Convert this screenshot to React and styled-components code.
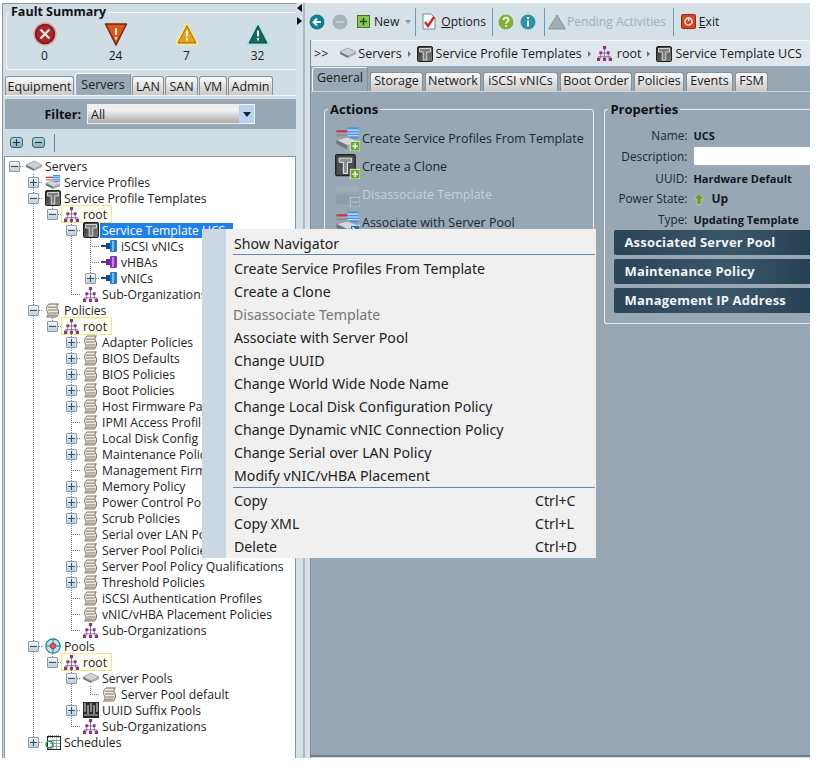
import styled, { createGlobalStyle } from "styled-components";

const GlobalStyle = createGlobalStyle`
  html, body { margin: 0; padding: 0; background: #fff; }
  body { font-family: "Open Sans", "Liberation Sans", sans-serif; color: #1c1c1c; }
  * { box-sizing: border-box; }
`;

/* ---- icons ---- */
const ServerIcon = ({ w = 18 }) => (
  <svg width={w} height={w * 0.67} viewBox="0 0 18 12">
    <path d="M1 5 9 1l8 4-8 4z" fill="#cfd2d4" stroke="#8b8f92" strokeWidth=".7" />
    <path d="M1 5v2l8 4V9z" fill="#6f7376" />
    <path d="M17 5v2l-8 4V9z" fill="#a5a9ac" />
  </svg>
);

const ProfileIcon = ({ size = 18, badge }) => (
  <svg width={size} height={size} viewBox="0 0 18 18">
    <rect x="1" y="3" width="8" height="1.6" fill="#c2384a" />
    <rect x="1" y="6" width="8" height="1.4" fill="#8a8f94" />
    <rect x="9" y="1" width="8" height="8" fill="#4b93d8" />
    <path d="M9 3h8M9 5h8M9 7h8" stroke="#d8ecfa" strokeWidth=".8" />
    <path d="M1 10 9 8l8 3-8 3z" fill="#d4d7d9" stroke="#8b8f92" strokeWidth=".5" />
    <path d="M1 10v3l8 4v-3z" fill="#74787b" />
    <path d="M17 11v3l-8 3v-3z" fill="#a5a9ac" />
    {badge}
  </svg>
);

const TemplateIcon = ({ size = 16 }) => (
  <svg width={size} height={size} viewBox="0 0 16 16">
    <defs>
      <linearGradient id="tpl" x1="0" y1="0" x2="1" y2="1">
        <stop offset="0" stopColor="#2a2a2a" />
        <stop offset="1" stopColor="#858585" />
      </linearGradient>
    </defs>
    <rect x=".5" y=".5" width="15" height="15" rx="1.5" fill="url(#tpl)" stroke="#222" />
    <path d="M2.500 2.500h11v3.500h-3.700v8H6.200V6H2.500z" fill="#7f7f7f" stroke="#e2e2e2" strokeWidth=".9" />
  </svg>
);

const OrgIcon = ({ size = 15 }) => (
  <svg width={size} height={size} viewBox="0 0 14 14">
    <path d="M7 2v9M3.500 6.500h7M3.500 6.500v5M10.500 6.500v5M1.500 10h11M1.500 10v2M12.500 10v2" stroke="#7d6a8c" strokeWidth=".8" fill="none" />
    <g fill="#90307f">
      <rect x="5.500" y="0" width="3" height="3" />
      <rect x="2.200" y="5" width="2.600" height="2.600" />
      <rect x="9.200" y="5" width="2.600" height="2.600" />
      <rect x="0" y="11" width="3" height="3" />
      <rect x="5.500" y="11" width="3" height="3" />
      <rect x="11" y="11" width="3" height="3" />
    </g>
  </svg>
);

const ScrollIcon = () => (
  <svg width="15" height="15" viewBox="0 0 15 15">
    <path d="M4 1h9.500c-2 1-2 3-.8 5 1.500 2.500 1 5.500-1.200 8H1.500c2-1 2-3.500.8-5.500C.8 6 1.500 2.500 4 1z" fill="#efeadf" stroke="#736b5e" strokeWidth="1" />
    <path d="M2.800 4.200h8.700M3 7h9M4.200 10h8.300M3.500 12.200h8" stroke="#736b5e" strokeWidth=".9" />
  </svg>
);

const PlugIcon = ({ color = "#1f7fd0", dark = "#0c4d8a" }) => (
  <svg width="17" height="12" viewBox="0 0 17 12">
    <rect x="0" y="5" width="7" height="2" fill={dark} />
    <rect x="5" y="3" width="4" height="6" fill={dark} />
    <rect x="9" y="0" width="7" height="12" rx="1" fill={color} />
    <rect x="11" y="1" width="2" height="10" fill="#fff" opacity=".45" />
  </svg>
);

const PoolIcon = () => (
  <svg width="16" height="16" viewBox="0 0 16 16">
    <circle cx="8" cy="8" r="7.200" fill="#bfe3ea" stroke="#1d7f93" strokeWidth="1.200" />
    <path d="M8 1v14M1 8h14" stroke="#1d7f93" strokeWidth="1" />
    <circle cx="8" cy="8" r="2.800" fill="#d8576a" stroke="#a3273b" strokeWidth=".8" />
  </svg>
);

const UuidIcon = () => (
  <svg width="16" height="16" viewBox="0 0 16 16">
    <rect width="16" height="16" fill="#2b2b2b" />
    <path d="M2 1v9M5 3v9M8 1v9M11 3v9M14 1v9" stroke="#c9c9c9" strokeWidth="1.200" />
    <path d="M1 13h14" stroke="#777" strokeWidth="2" />
  </svg>
);

const ScheduleIcon = () => (
  <svg width="16" height="15" viewBox="0 0 16 15">
    <rect x="2.500" y="1.500" width="13" height="13" fill="#fff" stroke="#222" />
    <path d="M3 1.500h12" stroke="#222" strokeWidth="2" strokeDasharray="1 1" />
    <path d="M5 5.500h10M5 8.500h10M5 11.500h10M8 4v10M11.500 4v10" stroke="#7d8a94" strokeWidth=".8" />
    <circle cx="4.500" cy="9.500" r="3.400" fill="none" stroke="#2a9a5e" strokeWidth="1.600" />
  </svg>
);

const nodeIcons = {
  server: <ServerIcon />,
  profile: <ProfileIcon size={16} />,
  template: <TemplateIcon />,
  org: <OrgIcon />,
  scroll: <ScrollIcon />,
  vnic: <PlugIcon />,
  vhba: <PlugIcon color="#8a2fc4" dark="#6b2a8c" />,
  pool: <PoolIcon />,
  uuid: <UuidIcon />,
  schedule: <ScheduleIcon />,
};

const PlusMinus = ({ plus, color = "#24527a" }) => (
  <svg width="9" height="9" viewBox="0 0 9 9">
    <path d={plus ? "M1 4.500h7M4.500 1v7" : "M1 4.500h7"} stroke={color} strokeWidth="1.100" />
  </svg>
);

const Badge = ({ kind }) => (
  <g>
    <rect x="11" y="11" width="7" height="7" fill={kind === "arrow" ? "#1b70b8" : kind === "minus" ? "#8e99a3" : "#6aa92e"} stroke="#eef5e4" strokeWidth=".6" />
    {kind === "plus" && <path d="M12.500 14.500h4M14.500 12.500v4" stroke="#fff" strokeWidth="1" />}
    {kind === "arrow" && <path d="M12.500 12.500l4 4M16.500 14v2.500H14" stroke="#fff" strokeWidth="1" fill="none" />}
    {kind === "minus" && <path d="M12.500 14.500h4" stroke="#cfd5da" strokeWidth="1" />}
  </g>
);

const FaultRound = () => (
  <svg width="24" height="24" viewBox="0 0 24 24">
    <circle cx="12" cy="12" r="11" fill="#7d1a22" stroke="#e7a7a0" strokeWidth="1.500" />
    <circle cx="12" cy="12" r="8.500" fill="#a32a30" />
    <path d="M7.500 7.500l9 9M16.500 7.500l-9 9" stroke="#f4e3e0" strokeWidth="2.200" />
  </svg>
);

const FaultDown = () => (
  <svg width="24" height="24" viewBox="0 0 24 24">
    <path d="M1.500 2h21L12 23z" fill="#d9571a" stroke="#7a2a10" strokeWidth="1.600" strokeLinejoin="round" />
    <path d="M12 6v7M12 15v2.500" stroke="#f6e3c8" strokeWidth="2.200" />
  </svg>
);

const FaultUp = ({ fill, edge, glow }) => (
  <svg width="24" height="24" viewBox="0 0 24 24">
    <path d="M12 1.500 23 22.500H1z" fill={fill} stroke={glow} strokeWidth="2.400" strokeLinejoin="round" />
    <path d="M12 3.500 21 21H3z" fill={fill} stroke={edge} strokeWidth=".8" strokeLinejoin="round" />
    <path d="M12 8.500v6M12 16v2.500" stroke="#f5f3e8" strokeWidth="2" />
  </svg>
);

const RoundButton = ({ color, children }) => (
  <svg width="16" height="16" viewBox="0 0 16 16">
    <circle cx="8" cy="8" r="7.500" fill={color} />
    {children}
  </svg>
);

/* ---- frame ---- */
const Frame = styled.div`
  position: relative;
  display: flex;
  width: 810px;
  height: 755px;
  margin-top: 3px;
  overflow: hidden;
`;

const LeftPanel = styled.div`
  width: 294px;
  margin-left: 2px;
  flex-shrink: 0;
  display: flex;
  flex-direction: column;
  background: #d0dde5;
  border-top: 1px solid #8e979e;
  border-left: 1px solid #8e979e;
  overflow: hidden;
`;

const Splitter = styled.div`
  width: 10px;
  flex-shrink: 0;
  display: flex;
  flex-direction: column;
  align-items: flex-start;
  gap: 5px;
  padding-top: 1px;
  background: linear-gradient(to right, #d3e0e8 0 7px, #aeb9c1 7px 9px, #d3e0e8 9px);
`;

const SplitArrow = styled.span`
  width: 0;
  height: 0;
  margin-left: 1px;
  border-top: 4px solid transparent;
  border-bottom: 4px solid transparent;
  ${(p) => (p.$left ? "border-right: 5px solid #111;" : "border-left: 5px solid #111;")}
`;

const RightPanel = styled.div`
  flex: 1;
  min-width: 0;
  display: flex;
  flex-direction: column;
  background: #d5e0e7;
`;

/* ---- fault summary ---- */
const FaultBox = styled.fieldset`
  height: 65px;
  margin: 1px 0 0 3px;
  padding: 0;
  min-width: 0;
  border: 1px solid #f2f6f8;
  border-right: none;
  border-radius: 3px 0 0 3px;
`;

const BoxTitle = styled.legend`
  padding: 0 2px;
  margin-left: ${(p) => p.$ml ?? 3}px;
  font-size: ${(p) => p.$size || 13}px;
  line-height: 14px;
  font-weight: 700;
  color: #111;
`;

const FaultGrid = styled.div`
  display: grid;
  grid-template-columns: repeat(4, 71px);
  margin-left: 2px;
`;

const FaultItem = styled.div`
  display: flex;
  flex-direction: column;
  align-items: center;
  font-size: 12px;
  line-height: 14px;
  gap: 3px;
  padding-top: 3px;
`;

/* ---- tabs ---- */
const TabRow = styled.div`
  display: flex;
  align-items: flex-end;
  height: 26px;
  padding-left: ${(p) => p.$pad}px;
  gap: ${(p) => p.$gap}px;
  border-bottom: 1px solid #f3f6f8;
  flex-shrink: 0;
`;

const Tab = styled.div`
  width: ${(p) => p.$w}px;
  height: ${(p) => p.$h}px;
  font-size: 12.500px;
  line-height: ${(p) => p.$lh}px;
  text-align: center;
  white-space: nowrap;
  color: #1c1c1c;
  border: 1px solid #8a9095;
  border-bottom: none;
  border-left-color: ${(p) => (p.$active ? "#f3f6f8" : "#8a9095")};
  border-top-color: ${(p) => (p.$active ? "#f3f6f8" : "#8a9095")};
  border-radius: 3px 3px 0 0;
  background: ${(p) => (p.$active ? "#9aa9b5" : "linear-gradient(#fafafa, #c9c9c9)")};
`;

const FilterBar = styled.div`
  height: 30px;
  margin: 3px 0 0 2px;
  display: flex;
  align-items: center;
  background: #98a7b4;
  flex-shrink: 0;
`;

const FilterLabel = styled.span`
  width: 76px;
  text-align: right;
  font-size: 12.500px;
  font-weight: 700;
  color: #111;
`;

const Select = styled.div`
  width: 168px;
  height: 20px;
  margin-left: 6px;
  display: flex;
  align-items: center;
  justify-content: space-between;
  padding-left: 3px;
  font-size: 12.500px;
  background: linear-gradient(#ececec, #f2f2f2 30%, #a9a9a9);
  border: 1px solid #eef2f5;
`;

const SelectArrow = styled.span`
  width: 15px;
  height: 18px;
  display: flex;
  align-items: center;
  justify-content: center;
  background: #b9d2f0;
  &::after {
    content: "";
    border-left: 4px solid transparent;
    border-right: 4px solid transparent;
    border-top: 5px solid #14233a;
  }
`;

const TreeTools = styled.div`
  height: 27px;
  display: flex;
  align-items: center;
  gap: 9px;
  padding-left: 7px;
  flex-shrink: 0;
`;

const TreeTool = styled.span`
  width: 13px;
  height: 11px;
  display: flex;
  align-items: center;
  justify-content: center;
  border: 1px solid #2f6a7a;
  border-radius: 3px;
  background: linear-gradient(#bcd0d8, #8fb0bb);
`;

const ToolBar = styled.span`
  width: 1px;
  height: 18px;
  background: #5b87ad;
`;

/* ---- tree ---- */
const Tree = styled.div`
  flex: 1;
  margin-left: 1px;
  padding-top: 1px;
  background: #fff;
  border-top: 1px solid #8a949c;
  border-left: 1px solid #8a949c;
  border-right: 1px solid #8a949c;
  overflow: hidden;
  font-size: 12.200px;
  color: #222;
`;

const Row = styled.div`
  display: flex;
  align-items: center;
  height: 16px;
  white-space: nowrap;
`;

const dotV = "repeating-linear-gradient(to bottom, #777 0 1px, transparent 1px 2px)";
const dotH = "repeating-linear-gradient(to right, #777 0 1px, transparent 1px 2px)";

const Guide = styled.span`
  flex: 0 0 19px;
  height: 16px;
  display: flex;
  align-items: center;
  justify-content: center;
  padding-right: 1px;
  background-repeat: no-repeat;
  background-image: ${(p) => {
    const parts = [];
    if (p.$v) parts.push(dotV);
    if (p.$h) parts.push(dotH);
    return parts.length ? parts.join(", ") : "none";
  }};
  background-size: ${(p) => {
    const parts = [];
    if (p.$v) parts.push(p.$v === "half" ? "1px 8px" : "1px 16px");
    if (p.$h) parts.push("10px 1px");
    return parts.join(", ") || "auto";
  }};
  background-position: ${(p) => {
    const parts = [];
    if (p.$v) parts.push("9px 0");
    if (p.$h) parts.push("9px 8px");
    return parts.join(", ") || "0 0";
  }};
`;

const Expander = styled.span`
  width: 11px;
  height: 11px;
  display: flex;
  align-items: center;
  justify-content: center;
  border: 1px solid #8d9ba6;
  border-radius: 1px;
  background: linear-gradient(#f4f6f7, #c6ccd1);
`;

const Node = styled.span`
  display: flex;
  align-items: center;
  height: 16px;
  ${(p) => p.$boxed && "outline: 1px solid #f0e884; background: #fffff4; padding-right: 3px;"}
`;

const NodeIcon = styled.span`
  flex: 0 0 19px;
  display: flex;
  align-items: center;
  justify-content: center;
`;

const NodeLabel = styled.span`
  padding: 0 1px 0 2px;
  line-height: 15px;
  ${(p) => p.$selected && "background: #1f80e8; color: #fff; padding-right: 8px;"}
`;

const treeData = [
  [0, "-", "server", "Servers"],
  [1, "+", "profile", "Service Profiles"],
  [1, "-", "template", "Service Profile Templates"],
  [2, "-", "org", "root", "boxed"],
  [3, "-", "template", "Service Template UCS", "selected"],
  [4, "", "vnic", "iSCSI vNICs"],
  [4, "", "vhba", "vHBAs"],
  [4, "+", "vnic", "vNICs"],
  [3, "", "org", "Sub-Organizations"],
  [1, "-", "scroll", "Policies"],
  [2, "-", "org", "root", "boxed"],
  [3, "+", "scroll", "Adapter Policies"],
  [3, "+", "scroll", "BIOS Defaults"],
  [3, "+", "scroll", "BIOS Policies"],
  [3, "+", "scroll", "Boot Policies"],
  [3, "+", "scroll", "Host Firmware Packages"],
  [3, "", "scroll", "IPMI Access Profiles"],
  [3, "+", "scroll", "Local Disk Config Policies"],
  [3, "+", "scroll", "Maintenance Policies"],
  [3, "", "scroll", "Management Firmware Packages"],
  [3, "+", "scroll", "Memory Policy"],
  [3, "+", "scroll", "Power Control Policies"],
  [3, "+", "scroll", "Scrub Policies"],
  [3, "", "scroll", "Serial over LAN Policies"],
  [3, "", "scroll", "Server Pool Policies"],
  [3, "+", "scroll", "Server Pool Policy Qualifications"],
  [3, "+", "scroll", "Threshold Policies"],
  [3, "", "scroll", "iSCSI Authentication Profiles"],
  [3, "", "scroll", "vNIC/vHBA Placement Policies"],
  [3, "", "org", "Sub-Organizations"],
  [1, "-", "pool", "Pools"],
  [2, "-", "org", "root", "boxed"],
  [3, "-", "server", "Server Pools"],
  [4, "", "scroll", "Server Pool default"],
  [3, "+", "uuid", "UUID Suffix Pools"],
  [3, "", "org", "Sub-Organizations"],
  [1, "+", "schedule", "Schedules"],
];

// true when a later row sits at this depth before the tree climbs above it
const continues = (index, depth) => {
  for (let i = index + 1; i < treeData.length; i++) {
    if (treeData[i][0] < depth) return false;
    if (treeData[i][0] === depth) return true;
  }
  return false;
};

const TreeRow = ({ index }) => {
  const [depth, exp, icon, label, flag] = treeData[index];
  const cols = [];
  for (let c = 0; c < depth; c++) {
    cols.push(<Guide key={c} $v={c > 0 && continues(index, c) ? "full" : undefined} />);
  }
  return (
    <Row>
      {cols}
      <Guide $v={depth === 0 ? undefined : continues(index, depth) ? "full" : "half"} $h>
        {exp && (
          <Expander>
            <PlusMinus plus={exp === "+"} />
          </Expander>
        )}
      </Guide>
      <Node $boxed={flag === "boxed"}>
        <NodeIcon>{nodeIcons[icon]}</NodeIcon>
        <NodeLabel $selected={flag === "selected"}>{label}</NodeLabel>
      </Node>
    </Row>
  );
};

/* ---- right toolbar ---- */
const Toolbar = styled.div`
  height: 37px;
  display: flex;
  align-items: center;
  padding-left: 3px;
  font-size: 12.100px;
  flex-shrink: 0;
`;

const ToolItem = styled.span`
  display: flex;
  align-items: center;
  gap: ${(p) => p.$gap ?? 4}px;
  margin-left: ${(p) => p.$ml || 0}px;
  color: ${(p) => (p.$muted ? "#a4afb7" : "#1c1c1c")};
  white-space: nowrap;
`;

const Sep = styled.span`
  width: 1px;
  height: 28px;
  margin-left: ${(p) => p.$ml}px;
  background: #6f97b8;
`;

const Underline = styled.span`
  text-decoration: underline;
  text-underline-offset: 1px;
`;

const Content = styled.div`
  flex: 1;
  min-height: 0;
  margin-left: 4px;
  display: flex;
  flex-direction: column;
  border-left: 1px solid #7f8a92;
`;

const Crumbs = styled.div`
  height: 26px;
  display: flex;
  align-items: center;
  gap: 3px;
  padding-left: 3px;
  font-size: 12.500px;
  white-space: nowrap;
  background: #e0e7ec;
  border-top: 1px solid #f2f5f7;
  flex-shrink: 0;
`;

const CrumbIcon = styled.span`
  display: flex;
  margin: 0 ${(p) => p.$mr || 0}px 0 ${(p) => p.$ml || 0}px;
`;

const CrumbArrow = styled.span`
  width: 0;
  height: 0;
  margin: 0 3px;
  border-top: 3px solid transparent;
  border-bottom: 3px solid transparent;
  border-left: 3px solid #5f7384;
`;

const MainTabs = styled(TabRow)`
  background: #98a7b4;
  border-bottom: 1px solid #c9d3da;
`;

const GeneralPanel = styled.div`
  flex: 1;
  min-height: 0;
  display: flex;
  align-items: flex-start;
  gap: 10px;
  padding: 10px 0 0 13px;
  background: #98a7b4;
  border-bottom: 2px solid #6f7b85;
  margin-bottom: 1px;
`;

const GroupBox = styled.fieldset`
  margin: 0;
  height: 222px;
  width: ${(p) => p.$w}px;
  padding: 0;
  border: 1px solid #e6ecf0;
  border-radius: 3px;
  ${(p) => p.$open && "border-right: none; border-radius: 3px 0 0 3px;"}
  min-width: 0;
`;

const ActionList = styled.div`
  display: flex;
  flex-direction: column;
  padding: 8px 0 0 10px;
`;

const ActionRow = styled.div`
  display: flex;
  align-items: center;
  height: 28px;
  gap: 2px;
  font-size: 12.500px;
  white-space: nowrap;
  color: ${(p) => (p.$off ? "#c6d0d8" : "#1c2731")};
`;

const PropGrid = styled.div`
  display: grid;
  grid-template-columns: 82px 1fr;
  column-gap: 6px;
  padding-top: 9px;
  align-items: center;
  font-size: 11.800px;
`;

const PropLabel = styled.span`
  text-align: right;
  white-space: nowrap;
  height: ${(p) => p.$h}px;
  line-height: ${(p) => p.$h}px;
  color: #1c2731;
`;

const PropValue = styled.span`
  font-weight: 700;
  font-size: ${(p) => p.$size || 11}px;
  white-space: nowrap;
  display: flex;
  align-items: center;
  gap: 6px;
  color: #10181f;
`;

const DescInput = styled.span`
  display: block;
  height: 18px;
  background: #fff;
  margin-left: 1px;
`;

const PoolBars = styled.div`
  display: flex;
  flex-direction: column;
  gap: 4px;
  padding-left: 9px;
`;

const PoolBar = styled.div`
  height: 25px;
  padding-left: 10px;
  font-size: 13px;
  font-weight: 700;
  line-height: 25px;
  color: #f1f5f7;
  letter-spacing: .2px;
  border-radius: 2px 0 0 2px;
  background: linear-gradient(to right, #2b4558, #3a5769 60%, #254053);
`;

/* ---- context menu ---- */
const Menu = styled.div`
  position: absolute;
  left: 202px;
  top: 226px;
  width: 394px;
  height: 329px;
  padding-top: 3px;
  background: linear-gradient(to right, #cbd8e1 24px, #f0f0f0 24px);
  font-family: "Noto Sans", "Open Sans", sans-serif;
  font-size: 14.150px;
  color: #222;
`;

const MenuItem = styled.div`
  display: flex;
  justify-content: space-between;
  height: ${(p) => p.$h || 23}px;
  line-height: 23px;
  padding: 0 18px 0 ${(p) => (p.$off ? 31 : 32)}px;
  color: ${(p) => (p.$off ? "#757575" : "#222")};
`;

const MenuSep = styled.div`
  height: 1px;
  margin: 0 1px ${(p) => p.$after}px 31px;
  background: #6a87b3;
`;

const menuMain = [
  { label: "Create Service Profiles From Template" },
  { label: "Create a Clone" },
  { label: "Disassociate Template", off: true },
  { label: "Associate with Server Pool" },
  { label: "Change UUID" },
  { label: "Change World Wide Node Name" },
  { label: "Change Local Disk Configuration Policy" },
  { label: "Change Dynamic vNIC Connection Policy" },
  { label: "Change Serial over LAN Policy" },
  { label: "Modify vNIC/vHBA Placement" },
];

const menuEdit = [
  ["Copy", "Ctrl+C"],
  ["Copy XML", "Ctrl+L"],
  ["Delete", "Ctrl+D"],
];

const navTabs = [
  ["Equipment", 69],
  ["Servers", 56, true],
  ["LAN", 32],
  ["SAN", 33],
  ["VM", 28],
  ["Admin", 45],
];

const detailTabs = [
  ["General", 56, true],
  ["Storage", 53],
  ["Network", 56],
  ["iSCSI vNICs", 75],
  ["Boot Order", 72],
  ["Policies", 50],
  ["Events", 47],
  ["FSM", 33],
];

const Shortcut = styled.span`
  width: 43px;
`;

export default function App() {
  return (
    <>
      <GlobalStyle />
      <Frame>
        <LeftPanel>
          <FaultBox>
            <BoxTitle $ml={2} $size={12.5}>Fault Summary</BoxTitle>
            <FaultGrid>
              <FaultItem><FaultRound />0</FaultItem>
              <FaultItem><FaultDown />24</FaultItem>
              <FaultItem><FaultUp fill="#e0a21f" edge="#8a5a10" glow="#f6e69a" />7</FaultItem>
              <FaultItem><FaultUp fill="#15685f" edge="#0b3f3a" glow="#a8e6e2" />32</FaultItem>
            </FaultGrid>
          </FaultBox>
          <TabRow $pad={2} $gap={1}>
            {navTabs.map(([label, w, active]) => (
              <Tab key={label} $w={w} $active={active} $h={active ? 22 : 19} $lh={active ? 22 : 20}>{label}</Tab>
            ))}
          </TabRow>
          <FilterBar>
            <FilterLabel>Filter:</FilterLabel>
            <Select>
              All
              <SelectArrow />
            </Select>
          </FilterBar>
          <TreeTools>
            <TreeTool><PlusMinus plus color="#0c3a52" /></TreeTool>
            <TreeTool><PlusMinus color="#0c3a52" /></TreeTool>
            <ToolBar />
          </TreeTools>
          <Tree>
            {treeData.map((row, i) => (
              <TreeRow key={i} index={i} />
            ))}
          </Tree>
        </LeftPanel>

        <Splitter>
          <SplitArrow $left />
          <SplitArrow />
        </Splitter>

        <RightPanel>
          <Toolbar>
            <ToolItem>
              <RoundButton color="#0f7f8f">
                <path d="M12 8H5M8 4.500 4.500 8 8 11.500" stroke="#fff" strokeWidth="2" fill="none" />
              </RoundButton>
            </ToolItem>
            <ToolItem $ml={7}>
              <RoundButton color="#a9b2b9">
                <path d="M4 8h8" stroke="#c2c9ce" strokeWidth="2" />
              </RoundButton>
            </ToolItem>
            <ToolItem $ml={9} $gap={4}>
              <svg width="13" height="13" viewBox="0 0 13 13">
                <rect x=".5" y=".5" width="12" height="12" fill="#8dc05a" stroke="#3f7a22" />
                <path d="M3 6.500h7M6.500 3v7" stroke="#1d4f12" strokeWidth="1.500" />
              </svg>
              New
            </ToolItem>
            <ToolItem $ml={6}>
              <svg width="6" height="4" viewBox="0 0 6 4"><path d="M0 0h6L3 4z" fill="#8a9aa6" /></svg>
            </ToolItem>
            <Sep $ml={4} />
            <ToolItem $ml={6} $gap={4}>
              <svg width="15" height="17" viewBox="0 0 15 17">
                <path d="M1 1h8l4 4v11H1z" fill="#fff" stroke="#7b8791" />
                <path d="M3 9l3 4 6-9" stroke="#d3212b" strokeWidth="2.400" fill="none" />
              </svg>
              <span><Underline>O</Underline>ptions</span>
            </ToolItem>
            <Sep $ml={6} />
            <ToolItem $ml={5}>
              <RoundButton color="#86ad3f">
                <path d="M5.500 6c0-3.200 5-3.200 5 0 0 2-2.500 1.800-2.500 3.800M8 11v1.800" stroke="#f3f6e2" strokeWidth="1.700" fill="none" />
              </RoundButton>
            </ToolItem>
            <ToolItem $ml={6}>
              <RoundButton color="#2f93a8">
                <path d="M8 6.500v6M8 3.300v1.800" stroke="#fff" strokeWidth="2" />
              </RoundButton>
            </ToolItem>
            <Sep $ml={8} />
            <ToolItem $ml={3} $gap={1} $muted>
              <svg width="18" height="16" viewBox="0 0 18 16">
                <path d="M9 1 17.500 15H.5z" fill="#a2acb4" stroke="#8a959d" />
              </svg>
              Pending Activities
            </ToolItem>
            <Sep $ml={7} />
            <ToolItem $ml={7} $gap={3}>
              <svg width="15" height="15" viewBox="0 0 15 15">
                <rect x=".5" y=".5" width="14" height="14" rx="1" fill="#cf4a26" stroke="#8f2c12" />
                <circle cx="7.500" cy="7.500" r="3.500" fill="none" stroke="#fbe6d8" strokeWidth="1.500" />
                <path d="M7.500 3v4" stroke="#fbe6d8" strokeWidth="1.500" />
              </svg>
              <span><Underline>E</Underline>xit</span>
            </ToolItem>
          </Toolbar>
          <Content>
            <Crumbs>
              &gt;&gt;
              <CrumbIcon $ml={8} $mr={-2}><ServerIcon /></CrumbIcon>
              Servers
              <CrumbArrow />
              <TemplateIcon />
              Service Profile Templates
              <CrumbArrow />
              <CrumbIcon $mr={2}><OrgIcon /></CrumbIcon>
              root
              <CrumbArrow />
              <TemplateIcon />
              Service Template UCS
            </Crumbs>
            <MainTabs $pad={1} $gap={2}>
              {detailTabs.map(([label, w, active]) => (
                <Tab key={label} $w={w} $active={active} $h={active ? 24 : 19} $lh={active ? 20 : 16}>{label}</Tab>
              ))}
            </MainTabs>
            <GeneralPanel>
              <GroupBox $w={271}>
                <BoxTitle>Actions</BoxTitle>
                <ActionList>
                  <ActionRow><ProfileIcon size={25} badge={<Badge kind="plus" />} />Create Service Profiles From Template</ActionRow>
                  <ActionRow>
                    <svg width="25" height="25" viewBox="0 0 18 18">
                      <rect x=".5" y=".5" width="14" height="15" rx="1" fill="#4b4f52" stroke="#222" />
                      <path d="M3 3h9v3H9v8H6V6H3z" fill="#8d9094" stroke="#eee" strokeWidth=".7" />
                      <Badge kind="plus" />
                    </svg>
                    Create a Clone
                  </ActionRow>
                  <ActionRow $off>
                    <svg width="25" height="25" viewBox="0 0 18 18" opacity=".55">
                      <path d="M1 3h16v4H1z" fill="#aab4bc" />
                      <path d="M1 9h16v7H1z" fill="#8b959d" />
                      <Badge kind="minus" />
                    </svg>
                    Disassociate Template
                  </ActionRow>
                  <ActionRow><ProfileIcon size={25} badge={<Badge kind="arrow" />} />Associate with Server Pool</ActionRow>
                </ActionList>
              </GroupBox>
              <GroupBox $w={206} $open>
                <BoxTitle>Properties</BoxTitle>
                <PropGrid>
                  <PropLabel $h={20}>Name:</PropLabel>
                  <PropValue>UCS</PropValue>
                  <PropLabel $h={22}>Description:</PropLabel>
                  <DescInput />
                  <PropLabel $h={22}>UUID:</PropLabel>
                  <PropValue>Hardware Default</PropValue>
                  <PropLabel $h={19}>Power State:</PropLabel>
                  <PropValue $size={12}>
                    <svg width="12" height="12" viewBox="0 0 12 12">
                      <path d="M6 .5 11 6H8v5.500H4V6H1z" fill="#6f9f2a" stroke="#cfe6a8" strokeWidth=".5" />
                    </svg>
                    Up
                  </PropValue>
                  <PropLabel $h={22}>Type:</PropLabel>
                  <PropValue>Updating Template</PropValue>
                </PropGrid>
                <PoolBars>
                  <PoolBar>Associated Server Pool</PoolBar>
                  <PoolBar>Maintenance Policy</PoolBar>
                  <PoolBar>Management IP Address</PoolBar>
                </PoolBars>
              </GroupBox>
            </GeneralPanel>
          </Content>
        </RightPanel>

        <Menu>
          <MenuItem $h={22}>Show Navigator</MenuItem>
          <MenuSep $after={2} />
          {menuMain.map((item) => (
            <MenuItem key={item.label} $off={item.off}>{item.label}</MenuItem>
          ))}
          <MenuSep $after={1} />
          {menuEdit.map(([label, keys]) => (
            <MenuItem key={label}>
              {label}
              <Shortcut>{keys}</Shortcut>
            </MenuItem>
          ))}
        </Menu>
      </Frame>
    </>
  );
}
